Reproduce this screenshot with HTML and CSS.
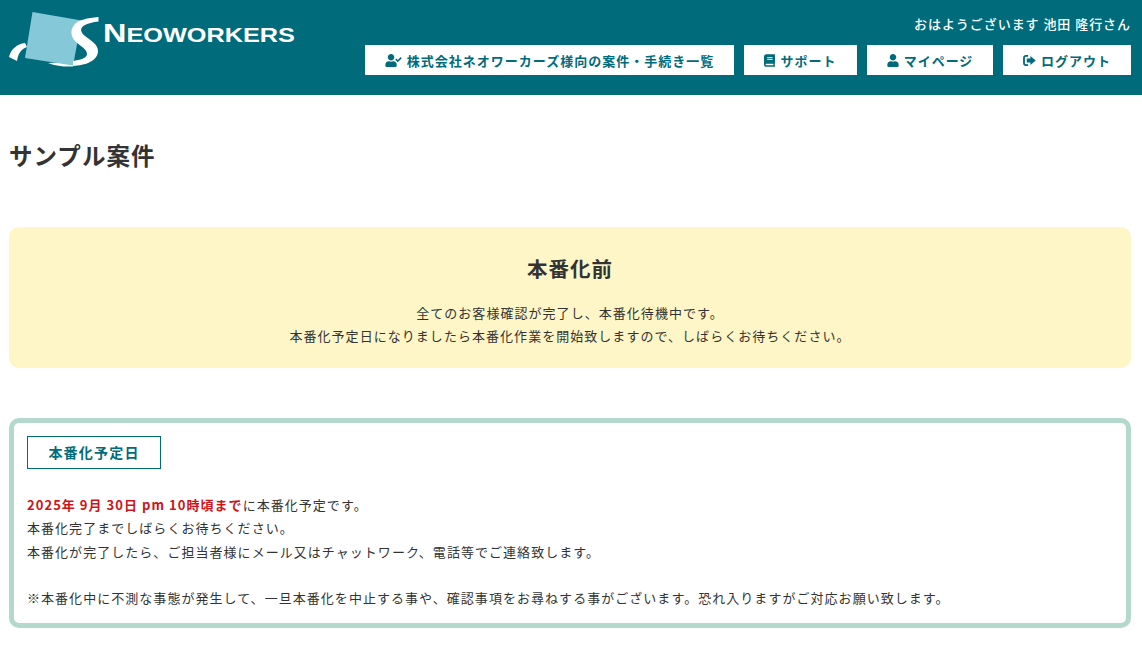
FILE: index.html
```html
<!DOCTYPE html>
<html lang="ja">
<head>
<meta charset="utf-8">
<title>サンプル案件</title>
<link rel="stylesheet" href="styles.css">
</head>
<body>
<header class="site-header">
  <a class="logo" href="#">
    <svg class="logo-svg" viewBox="0 0 300 70" width="300" height="70" role="img" aria-label="Neoworkers">
      <path class="logo-white" d="M9 57C11 49 17 44 25 43L27 47C21 49 18 54 17 61Z"/>
      <path class="logo-white" d="M48 63C56 66 65 67 73 66.500L73 62Z"/>
      <polygon class="logo-square" points="32.500,12 81.500,20.500 73,65.500 25,58"/>
      <path class="logo-white" d="M98.500 17C87 18 79 20 75 24C70 29 70.500 36 75 41C80 46 87 49 87 54C87 58 80 60 73 61L73 66C85 65.500 98 61 98 51C98 44 90 40 85 36C80 32 80 28 84 25.500C88 23.500 93 22 98.500 21.500Z"/>
      <text class="logo-text" x="103" y="41.500" textLength="192" lengthAdjust="spacingAndGlyphs"><tspan class="logo-cap">N</tspan>EOWORKERS</text>
    </svg>
  </a>
  <div class="header-right">
    <p class="greeting">おはようございます 池田 隆行さん</p>
    <nav class="nav">
      <a class="nav-btn nav-btn-wide" href="#">
        <svg class="icon icon-usercheck" viewBox="0 0 640 512"><path d="M224 256c70.700 0 128-57.300 128-128S294.700 0 224 0 96 57.300 96 128s57.300 128 128 128zm89.600 32h-16.700c-22.200 10.200-46.900 16-72.900 16s-50.600-5.800-72.900-16h-16.700C60.200 288 0 348.200 0 422.400V464c0 26.500 21.500 48 48 48h352c26.500 0 48-21.500 48-48v-41.600c0-74.200-60.200-134.400-134.400-134.400zm323-128.400l-27.800-28.100c-4.600-4.700-12.100-4.700-16.800-.1l-104.800 104-45.500-45.800c-4.600-4.700-12.100-4.700-16.800-.1l-28.100 27.900c-4.700 4.600-4.700 12.100-.1 16.800l81.700 82.300c4.600 4.700 12.100 4.700 16.800.1l141.300-140.200c4.600-4.700 4.700-12.200.1-16.800z"/></svg>
        <span class="nav-label">株式会社ネオワーカーズ様向の案件・手続き一覧</span>
      </a>
      <a class="nav-btn nav-btn-support" href="#">
        <svg class="icon icon-book" viewBox="0 0 448 512"><path d="M448 360V24c0-13.300-10.700-24-24-24H96C43 0 0 43 0 96v320c0 53 43 96 96 96h328c13.300 0 24-10.700 24-24v-16c0-7.500-3.500-14.300-8.900-18.700-4.200-15.400-4.200-59.300 0-74.700 5.400-4.300 8.900-11.100 8.900-18.600zM128 134c0-3.300 2.700-6 6-6h212c3.300 0 6 2.700 6 6v20c0 3.300-2.700 6-6 6H134c-3.300 0-6-2.700-6-6v-20zm0 64c0-3.300 2.700-6 6-6h212c3.300 0 6 2.700 6 6v20c0 3.300-2.700 6-6 6H134c-3.300 0-6-2.700-6-6v-20zm253.400 250H96c-17.700 0-32-14.300-32-32 0-17.600 14.400-32 32-32h285.400c-1.900 17.100-1.900 46.900 0 64z"/></svg>
        <span class="nav-label">サポート</span>
      </a>
      <a class="nav-btn nav-btn-mypage" href="#">
        <svg class="icon icon-user" viewBox="0 0 448 512"><path d="M224 256c70.700 0 128-57.300 128-128S294.700 0 224 0 96 57.300 96 128s57.300 128 128 128zm89.600 32h-16.700c-22.200 10.200-46.900 16-72.900 16s-50.600-5.800-72.900-16h-16.700C60.200 288 0 348.200 0 422.400V464c0 26.500 21.500 48 48 48h352c26.500 0 48-21.500 48-48v-41.600c0-74.200-60.200-134.400-134.400-134.400z"/></svg>
        <span class="nav-label">マイページ</span>
      </a>
      <a class="nav-btn nav-btn-logout" href="#">
        <svg class="icon icon-logout" viewBox="0 0 14 12"><path d="M3 0H5.500V2H3.200C2.500 2 2 2.500 2 3.200V8.800C2 9.500 2.500 10 3.200 10H5.500V12H3C1.300 12 0 10.700 0 9V3C0 1.300 1.300 0 3 0Z"/><path d="M8 1L13.800 6L8 11V8.300H4V3.700H8Z"/></svg>
        <span class="nav-label">ログアウト</span>
      </a>
    </nav>
  </div>
</header>

<main class="main">
  <h1 class="page-title">サンプル案件</h1>

  <section class="notice">
    <h2 class="notice-title">本番化前</h2>
    <p class="notice-text">全てのお客様確認が完了し、本番化待機中です。<br>本番化予定日になりましたら本番化作業を開始致しますので、しばらくお待ちください。</p>
  </section>

  <section class="schedule">
    <h3 class="schedule-tag">本番化予定日</h3>
    <p class="schedule-text"><strong class="deadline">2025年 9月 30日 pm 10時頃まで</strong>に本番化予定です。<br>本番化完了までしばらくお待ちください。<br>本番化が完了したら、ご担当者様にメール又はチャットワーク、電話等でご連絡致します。<br><br>※本番化中に不測な事態が発生して、一旦本番化を中止する事や、確認事項をお尋ねする事がございます。恐れ入りますがご対応お願い致します。</p>
  </section>
</main>
</body>
</html>
```
FILE: styles.css
```css
* { box-sizing: border-box; }
html, body { margin: 0; padding: 0; }
body {
  background: #fff;
  color: #333;
  font-family: "Noto Sans CJK JP", "Noto Sans", sans-serif;
  font-size: 13px;
  letter-spacing: 1.04px;
  line-height: 1.8;
}
.site-header {
  height: 95px;
  background: #006b7b;
  display: flex;
  justify-content: space-between;
  padding: 0 11px 0 0;
}
.logo { display: block; height: 70px; }
.logo-svg { display: block; }
.logo-white { fill: #fff; }
.logo-square { fill: #85c9d8; }
.logo-text {
  fill: #fff;
  font-family: "Liberation Sans", sans-serif;
  font-weight: 700;
  font-size: 19.500px;
  letter-spacing: 0;
}
.logo-cap { font-size: 25px; }
.header-right {
  display: flex;
  flex-direction: column;
  align-items: flex-end;
}
.greeting {
  margin: 0;
  padding-top: 13px;
  height: 45px;
  color: #fff;
  font-weight: 500;
  font-size: 13px;
  line-height: 22px;
  letter-spacing: 0.95px;
}
.nav { display: flex; gap: 10px; }
.nav-btn {
  height: 30px;
  display: flex;
  align-items: center;
  justify-content: center;
  gap: 5px;
  background: #fff;
  color: #006b7b;
  font-weight: 700;
  font-size: 13px;
  letter-spacing: 1px;
  text-decoration: none;
}
.nav-label { padding-top: 1px; }
.nav-btn-wide { width: 369px; }
.nav-btn-support { width: 113px; }
.nav-btn-mypage { width: 126px; }
.nav-btn-logout { width: 128px; }
.icon { fill: #006b7b; display: block; flex: none; }
.icon-usercheck { width: 17px; height: 13px; }
.icon-book { width: 11px; height: 13px; }
.icon-user { width: 12px; height: 13px; }
.icon-logout { width: 13px; height: 11px; }
.main { padding: 0 11px 0 9px; }
.page-title {
  margin: 0;
  padding-top: 40px;
  height: 132px;
  font-size: 23.500px;
  font-weight: 700;
  line-height: 40px;
  color: #333;
}
.notice {
  height: 141px;
  background: #fef6c6;
  border-radius: 10px;
  text-align: center;
  padding-top: 23px;
}
.notice-title {
  margin: 0 0 15px;
  font-size: 20.500px;
  font-weight: 700;
  line-height: 36px;
}
.notice-text { margin: 0; line-height: 23.400px; }
.schedule {
  margin-top: 50px;
  height: 210px;
  border: 5px solid #b5d8cc;
  border-radius: 10px;
  padding: 13px 13px 0;
}
.schedule-tag {
  margin: 0 0 24px;
  width: 134px;
  height: 33px;
  border: 1px solid #006b7b;
  color: #006b7b;
  font-size: 14px;
  font-weight: 700;
  line-height: 31px;
  text-align: center;
  letter-spacing: 1.200px;
}
.schedule-text { margin: 0; line-height: 23.300px; }
.deadline { color: #d0121b; font-weight: 700; }
```
